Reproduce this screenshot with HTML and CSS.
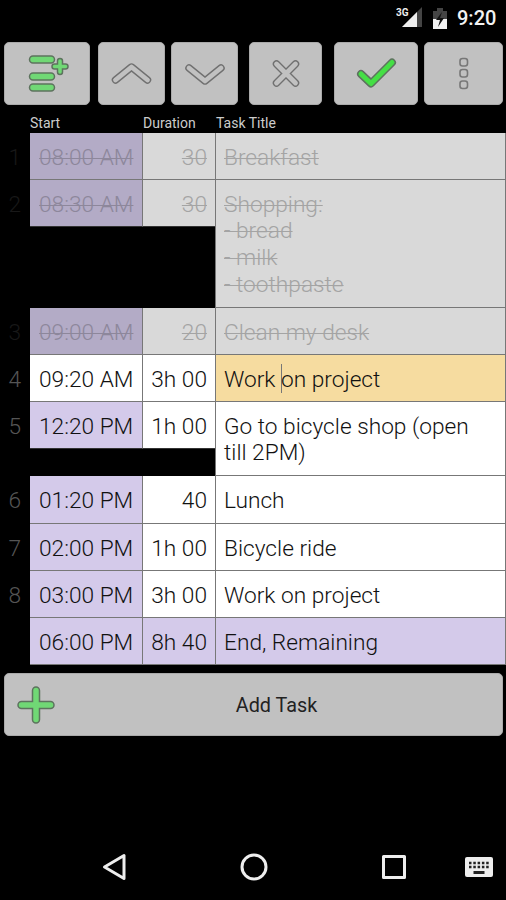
FILE: index.html
```html
<!DOCTYPE html>
<html lang="en">
<head>
<meta charset="utf-8">
<title>Task list</title>
<link rel="stylesheet" href="styles.css">
</head>
<body>
<header class="status">
  <svg class="signal" viewBox="0 0 27 36" width="27" height="36">
    <path fill="#444" d="M6 27L26 7v20z"/>
    <path fill="#eee" d="M6 27L21 12v15z"/>
    <text x="0" y="16" class="net">3G</text>
  </svg>
  <svg class="battery" viewBox="0 0 14 21" width="14" height="21">
    <path fill="#444" d="M0 3h4V0h6v3h4v9H0z"/>
    <path fill="#f2f2f2" d="M0 11h14v10H0z"/>
    <path fill="#111" d="M9 4L3 12h4l-2 7 6-9H7z"/>
  </svg>
  <span class="clock">9:20</span>
</header>
<nav class="toolbar">
  <button class="btn"><svg viewBox="0 0 86 63">
    <g class="outline"><path d="M29 17.500h18M29 34.500h18M29 45.500h18"/></g>
    <g class="fill"><path d="M29 17.500h18M29 34.500h18M29 45.500h18"/></g>
    <g class="outline small"><path d="M56 19v11M50.500 24.500h11"/></g>
    <g class="fill small"><path d="M56 19v11M50.500 24.500h11"/></g>
  </svg></button>
  <button class="btn"><svg viewBox="0 0 67 63">
    <path class="outline grey" d="M17.500 38L33.500 25l16 13"/><path class="fill grey" d="M17.500 38L33.500 25l16 13"/>
  </svg></button>
  <button class="btn"><svg viewBox="0 0 67 63">
    <path class="outline grey" d="M18 26L34 39l16-13"/><path class="fill grey" d="M18 26L34 39l16-13"/>
  </svg></button>
  <button class="btn"><svg viewBox="0 0 73 63">
    <path class="outline grey" d="M27.500 22l19 19M46.500 22l-19 19"/><path class="fill grey" d="M27.500 22l19 19M46.500 22l-19 19"/>
  </svg></button>
  <button class="btn"><svg viewBox="0 0 84 63">
    <path class="outline check" d="M27 32l10 9.500L58 20.500"/><path class="fill bright" d="M27 32l10 9.500L58 20.500"/>
  </svg></button>
  <button class="btn"><svg viewBox="0 0 79 63">
    <g class="dots"><rect x="36" y="16.500" width="7.500" height="7.500" rx="2.500"/><rect x="36" y="27.500" width="7.500" height="7.500" rx="2.500"/><rect x="36" y="39" width="7.500" height="7.500" rx="2.500"/></g>
  </svg></button>
</nav>
<main>
  <div class="row head"><span></span><span>Start</span><span>Duration</span><span>Task Title</span></div>
  <div class="row done"><span class="num">1</span><span class="cell start">08:00 AM</span><span class="cell dur">30</span><span class="cell title">Breakfast</span></div>
  <div class="row done list"><span class="num">2</span><span class="cell start">08:30 AM</span><span class="cell dur">30</span><span class="cell title">Shopping:<br>- bread<br>- milk<br>- toothpaste</span></div>
  <div class="row done"><span class="num">3</span><span class="cell start">09:00 AM</span><span class="cell dur">20</span><span class="cell title">Clean my desk</span></div>
  <div class="row active"><span class="num">4</span><span class="cell start">09:20 AM</span><span class="cell dur">3h 00</span><span class="cell title">Work <i class="caret"></i>on project</span></div>
  <div class="row double"><span class="num">5</span><span class="cell start">12:20 PM</span><span class="cell dur">1h 00</span><span class="cell title">Go to bicycle shop (open till 2PM)</span></div>
  <div class="row tall"><span class="num">6</span><span class="cell start">01:20 PM</span><span class="cell dur">40</span><span class="cell title">Lunch</span></div>
  <div class="row"><span class="num">7</span><span class="cell start">02:00 PM</span><span class="cell dur">1h 00</span><span class="cell title">Bicycle ride</span></div>
  <div class="row"><span class="num">8</span><span class="cell start">03:00 PM</span><span class="cell dur">3h 00</span><span class="cell title">Work on project</span></div>
  <div class="row end"><span class="num"></span><span class="cell start">06:00 PM</span><span class="cell dur">8h 40</span><span class="cell title">End, Remaining</span></div>
</main>
<button class="btn add">
  <svg viewBox="0 0 40 40" width="40" height="40"><path class="outline" d="M20 5.500v29M5.500 20h29"/><path class="fill" d="M20 5.500v29M5.500 20h29"/></svg>
  <span>Add Task</span>
</button>
<footer class="navbar">
  <svg viewBox="0 0 28 30" width="28" height="30"><path d="M3.500 15L23 3.500v23z"/></svg>
  <svg viewBox="0 0 30 30" width="30" height="30"><circle cx="15" cy="15" r="12"/></svg>
  <svg viewBox="0 0 26 26" width="26" height="26"><rect x="2.500" y="2.500" width="21" height="21"/></svg>
  <svg class="keyboard" viewBox="0 0 28 20" width="28" height="20"><rect class="body" width="28" height="20" rx="2"/><path class="keys" d="M4 6h20M4 10h20"/><path class="space" d="M8.500 15.500h11"/></svg>
</footer>
</body>
</html>
```
FILE: styles.css
```css
* { box-sizing: border-box; }
body {
  margin: 0;
  width: 506px;
  height: 900px;
  overflow: hidden;
  background: #000;
  color: #111;
  font-family: Roboto, sans-serif;
  display: flex;
  flex-direction: column;
}
.status {
  height: 36px;
  display: flex;
  justify-content: flex-end;
  align-items: center;
  padding-right: 11px;
  color: #f2f2f2;
}
.signal { margin-right: 10px; }
.net { font: 700 10px Roboto, sans-serif; fill: #eee; }
.battery { margin-right: 10px; }
.clock { font-size: 20px; font-weight: 500; width: 38px; white-space: nowrap; }
.toolbar {
  display: grid;
  grid-template-columns: 94px 73px 78px 85px 90px 79px;
  padding: 6px 3px 0 4px;
  height: 69px;
}
.btn {
  appearance: none;
  border: 1px solid #aaa;
  border-radius: 5px;
  background: #c1c1c1;
  padding: 0;
  margin: 0;
  height: 63px;
  font-family: inherit;
  color: #222;
}
.toolbar .btn:nth-child(1) { width: 86px; }
.toolbar .btn:nth-child(2) { width: 67px; }
.toolbar .btn:nth-child(3) { width: 67px; }
.toolbar .btn:nth-child(4) { width: 73px; }
.toolbar .btn:nth-child(5) { width: 84px; }
.toolbar .btn:nth-child(6) { width: 79px; }
.toolbar svg { display: block; width: calc(100% + 2px); height: 63px; margin: -1px; }
.outline, .fill { fill: none; stroke-linecap: round; stroke-linejoin: round; }
.outline { stroke: #5d735e; stroke-width: 8.500; }
.fill { stroke: #70d875; stroke-width: 5.500; }
.outline.small { stroke-width: 6.500; }
.fill.small { stroke-width: 3.500; }
.outline.check { stroke-width: 8; }
.fill.bright { stroke: #45df45; stroke-width: 5; }
.outline.grey { stroke: #707070; stroke-width: 7.500; }
.fill.grey { stroke: #c1c1c1; stroke-width: 4.800; }
.dots { fill: none; stroke: #777; stroke-width: 1.600; }
.row {
  display: grid;
  grid-template-columns: 30px 113px 73px 290px;
  height: 47px;
  align-items: start;
  font-size: 22.700px;
  font-weight: 300;
  line-height: 26.700px;
}
.head {
  height: 28px;
  font-size: 14px;
  font-weight: 400;
  line-height: 16px;
  padding-top: 10px;
  color: #ccc;
}
.list { height: 128px; }
.double { height: 74px; }
.tall { height: 48px; }
.num { padding: 11.600px 9px 0 0; text-align: right; color: #555; }
.cell {
  height: 47px;
  padding: 11.600px 8px 0 9px;
  border: 0 solid #777;
  border-width: 0 1px 1px 0;
  background: #fff;
  color: #111;
  white-space: nowrap;
}
.tall .cell { height: 48px; }
.start { background: #d4caea; }
.dur { text-align: right; padding-left: 0; }
.title { height: 100%; white-space: normal; padding-left: 8px; padding-right: 20px; }
.tall .title, .list .title, .double .title { height: 100%; }
.done .num { color: #181818; }
.done .cell { background: #d9d9d9; color: #a4a4a4; text-decoration: line-through; text-decoration-thickness: 1px; }
.done .start { background: #b3abc6; color: #8d879b; }
.active .start { background: #fff; }
.active .title { background: #f6dca0; }
.list .cell:not(.title), .double .cell:not(.title) { border-bottom-color: #333; }
.list .title, .double .title { box-shadow: -1px 0 #777; }
.caret { display: inline-block; width: 1px; height: 29px; margin: -6px -1px -7px 0; vertical-align: 1px; background: #777; }
.end .cell { background: #d4caea; }
.add {
  width: 499px;
  margin: 8px 0 0 4px;
  display: grid;
  grid-template-columns: 42px 437px;
  align-items: center;
  padding-left: 11px;
  font-size: 19.800px;
  font-weight: 400;
}
.add span { padding-top: 2px; }
.navbar {
  margin-top: auto;
  height: 66px;
  display: grid;
  grid-template-columns: 138px 142px 84px 28px;
  align-items: center;
  padding-left: 101px;
}
.navbar svg { fill: none; stroke: #eee; stroke-width: 3; stroke-linejoin: round; }
.navbar .body { fill: #eee; stroke: none; }
.navbar .keys { stroke: #222; stroke-width: 2.500; stroke-dasharray: 2.500 1.800; }
.navbar .space { stroke: #222; }
```
